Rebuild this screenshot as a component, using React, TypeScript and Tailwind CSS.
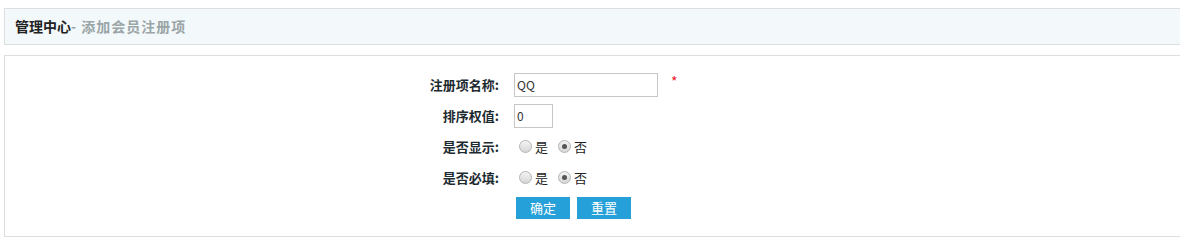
const font = { fontFamily: '"Noto Sans CJK SC", "Noto Sans", sans-serif' };

function Radio({ checked, label }: { checked?: boolean; label: string }) {
  return (
    <label className="flex items-center">
      <span className="w-[13px] h-[13px] rounded-full border border-[#b4b4b4] bg-gradient-to-b from-[#f4f4f4] to-[#d6d6d6] flex items-center justify-center">
        {checked && <span className="w-[5px] h-[5px] rounded-full bg-[#555]" />}
      </span>
      <span className="ml-[3px] text-[13px] text-[#222]">{label}</span>
    </label>
  );
}

function Row({ label, children }: { label: string; children: React.ReactNode }) {
  return (
    <div className="flex items-center h-[31px]">
      <div className="w-[494px] text-right font-bold text-[13px] text-[#1d2b30]">{label}</div>
      <div className="ml-[15px] flex items-center">{children}</div>
    </div>
  );
}

export default function App() {
  return (
    <div className="bg-white w-[1180px] h-[243px] overflow-hidden pt-[8px] pl-[4px]" style={font}>
      <div className="h-[37px] bg-[#f3f8fb] border-t border-b border-l border-[#dedede] flex items-center pl-[10px]">
        <span className="text-[14px] font-bold text-[#222]">管理中心</span>
        <span className="text-[14px] font-bold text-[#9aa5a7] tracking-[1px]">- 添加会员注册项</span>
      </div>
      <div className="mt-[10px] h-[182px] border-t border-b border-l border-[#dedede] pt-[13px]">
        <Row label="注册项名称:">
          <input
            defaultValue="QQ"
            className="w-[144px] h-[24px] border border-[#c6c6c6] px-[2px] text-[12px] text-[#333] outline-none"
          />
          <span className="ml-[13px] -mt-[6px] text-[14px] text-[#e22]">*</span>
        </Row>
        <Row label="排序权值:">
          <input
            defaultValue="0"
            className="w-[39px] h-[24px] border border-[#c6c6c6] px-[2px] text-[12px] text-[#333] outline-none"
          />
        </Row>
        <Row label="是否显示:">
          <div className="flex items-center gap-[10px] ml-[5px]">
            <Radio label="是" />
            <Radio checked label="否" />
          </div>
        </Row>
        <Row label="是否必填:">
          <div className="flex items-center gap-[10px] ml-[5px]">
            <Radio label="是" />
            <Radio checked label="否" />
          </div>
        </Row>
        <div className="flex mt-[4px] pl-[511px] gap-[7px]">
          <button className="w-[54px] h-[22px] bg-[#26a0d8] text-white text-[13px] leading-[22px]">确定</button>
          <button className="w-[54px] h-[22px] bg-[#26a0d8] text-white text-[13px] leading-[22px]">重置</button>
        </div>
      </div>
    </div>
  );
}
